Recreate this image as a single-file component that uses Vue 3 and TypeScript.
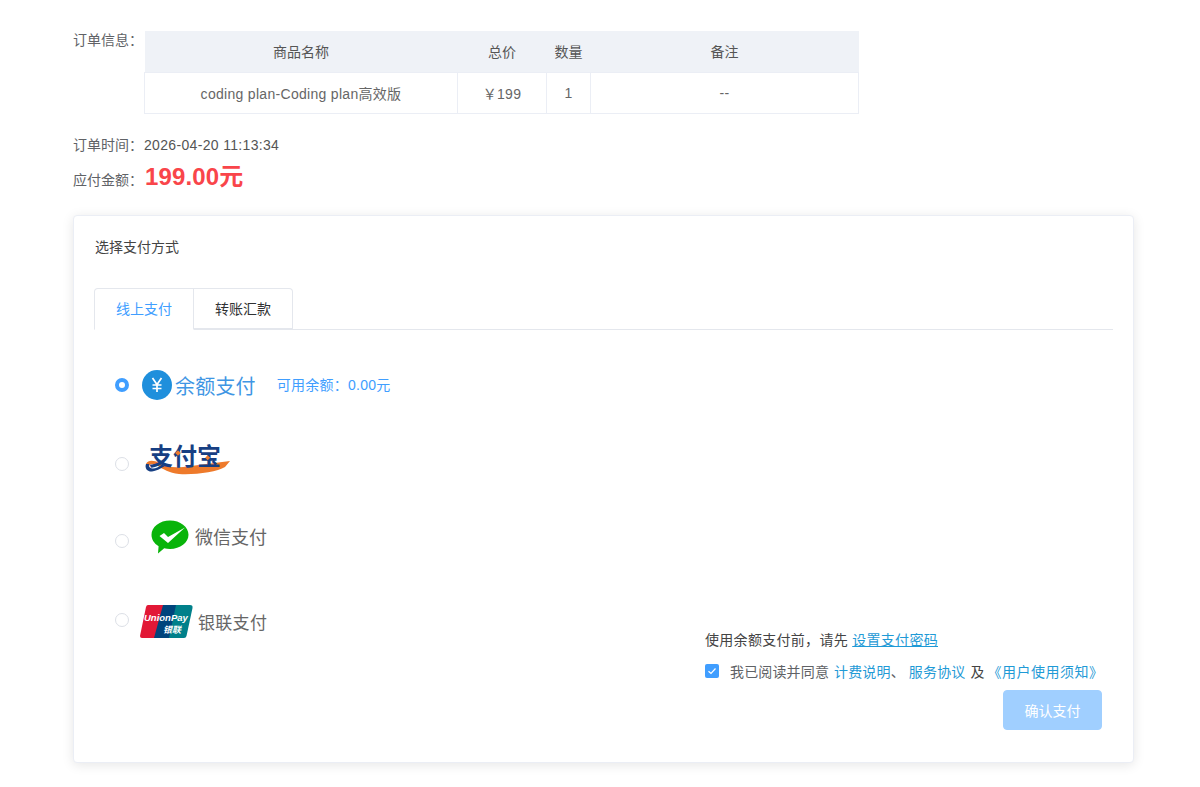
<script setup lang="ts">
const columns = [
  { title: '商品名称', value: 'coding plan-Coding plan高效版', width: 313 },
  { title: '总价', value: '￥199', width: 89 },
  { title: '数量', value: '1', width: 44 },
  { title: '备注', value: '--', width: 268 },
]
</script>

<template>
  <div class="page">
    <div class="order-row">
      <span class="label table-label">订单信息：</span>
      <table class="order-table">
        <colgroup>
          <col v-for="c in columns" :key="c.title" :style="{ width: c.width + 'px' }" />
        </colgroup>
        <thead>
          <tr><th v-for="c in columns" :key="c.title">{{ c.title }}</th></tr>
        </thead>
        <tbody>
          <tr><td v-for="c in columns" :key="c.title">{{ c.value }}</td></tr>
        </tbody>
      </table>
    </div>
    <div class="meta time"><span class="label">订单时间：</span><span class="value">2026-04-20 11:13:34</span></div>
    <div class="meta amount"><span class="label amount-label">应付金额：</span><span class="price">199.00元</span></div>

    <section class="card">
      <h2 class="card-title">选择支付方式</h2>
      <div class="tabs">
        <button class="tab active">线上支付</button>
        <button class="tab second">转账汇款</button>
      </div>
      <div class="pay-body">
        <div class="methods">
          <div class="method balance">
            <span class="radio checked"></span>
            <svg class="yuan-icon" width="30" height="30" viewBox="0 0 30 30">
              <circle cx="15" cy="15" r="15" fill="#1f8fdc" />
              <path d="M10.5 8 15 14.5 19.5 8M15 14.5V22M10.5 15h9M10.5 18.5h9" fill="none" stroke="#fff" stroke-width="1.7" />
            </svg>
            <span class="balance-name">余额支付</span>
            <span class="balance-left">可用余额：0.00元</span>
          </div>
          <div class="method alipay">
            <span class="radio"></span>
            <span class="alipay-logo">
              <svg class="alipay-swoosh" width="86" height="17" viewBox="0 0 86 17">
                <path d="M1 6C3 1.500 9 2 14 5 22 10 32 10 46 8L85 3 80 9C72 14 50 17 34 16 24 15 18 11 13 8 8 5 5 6 4 8Z" fill="#ee7a2b" />
                <path d="M1 6C-.500 10 2 14 7 13.500 11 13 15 11 20 8L17 6.500C13 9.500 10 11 7 10.500 4.500 10 3.500 8 4 6Z" fill="#173f83" />
              </svg>
              <span class="alipay-text">支付宝</span>
              <svg class="alipay-dots" width="86" height="30" viewBox="0 0 86 30">
                <rect x="32" y="7" width="4" height="4" fill="#ee7a2b" transform="rotate(45 34 9)" />
                <rect x="62" y="12" width="3.500" height="3.500" fill="#ee7a2b" transform="rotate(45 63.700 13.700)" />
              </svg>
            </span>
          </div>
          <div class="method wechat">
            <span class="radio"></span>
            <svg class="wechat-icon" width="38" height="34" viewBox="0 0 38 34">
              <path d="M19 .5C29.200.5 37.500 6.900 37.500 14.800S29.200 29 19 29c-2 0-4-.2-5.800-.8L7 33.500l.6-7.300C3.100 23.600.500 19.400.500 14.800.500 6.900 8.800.5 19 .5Z" fill="#09b40a" />
              <path d="M8.500 16 13 13l4 4 17-9.500L17 23Z" fill="#fff" />
            </svg>
            <span class="wechat-name">微信支付</span>
          </div>
          <div class="method union">
            <span class="radio"></span>
            <svg class="union-icon" width="53" height="33" viewBox="0 0 53 33">
              <path d="M8 0H25L17 33H2Q-.5 33 .2 30L6 2Q6.500 0 8 0Z" fill="#e21836" />
              <path d="M23 0H38L31 33H14Z" fill="#00447c" />
              <path d="M36 0H50Q53 0 52.500 3L46.500 31Q46 33 44 33H29Z" fill="#00808a" />
              <text x="4" y="16" class="union-latin">UnionPay</text>
              <text x="23" y="28" class="union-cn">银联</text>
            </svg>
            <span class="union-name">银联支付</span>
          </div>
        </div>
        <div class="confirm">
          <p class="pwd-tip">使用余额支付前，请先 <a class="pwd-link" href="#">设置支付密码</a></p>
          <div class="agree">
            <span class="checkbox">
              <svg width="14" height="14" viewBox="0 0 14 14"><path d="M3.500 7.200 6 9.500l4.500-5" fill="none" stroke="#fff" stroke-width="1.200" /></svg>
            </span>
            <span class="agree-text">我已阅读并同意</span>
            <a class="doc" href="#">计费说明</a><span class="doc-sep">、</span>
            <a class="doc service" href="#">服务协议</a>
            <span class="and">及</span>
            <a class="doc notice" href="#">《用户使用须知》</a>
          </div>
          <div class="actions"><button class="pay-btn" disabled>确认支付</button></div>
        </div>
      </div>
    </section>
  </div>
</template>

<style>
html, body { margin: 0; background: #fff; }
</style>

<style scoped>
.page {
  box-sizing: border-box;
  width: 1200px;
  height: 787px;
  overflow: hidden;
  padding: 31px 66px 0 73px;
  font-family: "Liberation Sans", "Noto Sans CJK SC", sans-serif;
  font-size: 14px;
  color: #606266;
}
.order-row { display: flex; align-items: flex-start; }
.label { width: 71px; flex: none; color: #606266; white-space: nowrap; }
.table-label { line-height: 18px; }
.order-table {
  width: 714px;
  table-layout: fixed;
  border-collapse: collapse;
  color: #606266;
}
.order-table th {
  height: 39px;
  padding: 0 0 2px;
  background: #eff2f7;
  font-weight: 400;
  color: #555;
}
.order-table td {
  height: 39px;
  padding: 0 0 1px;
  text-align: center;
  color: #666;
  letter-spacing: .3px;
  border: 1px solid #ebeef5;
}
.meta { display: flex; align-items: center; }
.time { margin-top: 20px; height: 20px; }
.value { color: #555; letter-spacing: .33px; padding-top: 1px; }
.amount { margin-top: 8px; height: 30px; }
.amount-label { padding-top: 4px; }
.price {
  margin-left: 1px;
  padding-bottom: 6px;
  color: #f9454a;
  font-size: 24px;
  font-weight: 700;
  letter-spacing: .15px;
}
.card {
  box-sizing: border-box;
  height: 548px;
  margin-top: 23px;
  padding: 21px 20px 0;
  background: #fff;
  border: 1px solid #ebeef5;
  border-radius: 4px;
  box-shadow: 0 2px 12px rgba(0, 0, 0, 0.1);
}
.card-title {
  margin: 0;
  padding-left: 1px;
  font-size: 14px;
  font-weight: 400;
  line-height: 20px;
  color: #444;
}
.tabs {
  display: flex;
  height: 41px;
  margin-top: 31px;
  border-bottom: 1px solid #e4e7ed;
}
.tab {
  box-sizing: border-box;
  height: 41px;
  padding: 0 0 2px;
  background: #fff;
  border: 1px solid #e4e7ed;
  font: inherit;
  color: #303133;
}
.tab.active {
  width: 100px;
  height: 42px;
  color: #409eff;
  border-bottom-color: #fff;
  border-radius: 4px 0 0 0;
}
.tab.second {
  width: 99px;
  border-left: 0;
  border-radius: 0 4px 0 0;
}
.pay-body {
  display: flex;
  justify-content: space-between;
  align-items: flex-start;
}
.methods { width: 400px; padding-left: 21px; }
.method { display: flex; align-items: center; }
.radio {
  box-sizing: border-box;
  flex: none;
  width: 14px;
  height: 14px;
  border: 1px solid #dcdfe6;
  border-radius: 50%;
  background: #fff;
}
.radio.checked {
  border: 4px solid #409eff;
}
.balance { height: 32px; margin-top: 39px; }
.yuan-icon { margin-left: 13px; flex: none; }
.balance-name {
  margin-left: 3px;
  font-size: 20px;
  letter-spacing: .2px;
  color: #3f96e4;
}
.balance-left {
  margin-left: 21px;
  color: #409eff;
  font-size: 14px;
  letter-spacing: .25px;
  padding-bottom: 2px;
}
.alipay { height: 40px; margin-top: 33px; align-items: flex-end; }
.alipay .radio { margin-bottom: 3px; }
.alipay-logo {
  position: relative;
  display: block;
  width: 90px;
  height: 40px;
  margin-left: 15px;
}
.alipay-text {
  position: absolute;
  left: 5px;
  top: 5px;
  font-family: "Noto Sans CJK SC", sans-serif;
  font-size: 24px;
  line-height: 32px;
  font-weight: 700;
  letter-spacing: 0;
  color: #173f83;
}
.alipay-swoosh { position: absolute; left: 1px; top: 24px; }
.alipay-dots { position: absolute; left: 0; top: 10px; }
.wechat { height: 36px; margin-top: 45px; }
.wechat .radio { margin-top: 8px; }
.wechat-icon { margin-left: 22px; flex: none; }
.wechat-name { margin-left: 6px; font-size: 18px; color: #666; position: relative; top: -1px; }
.union { height: 34px; margin-top: 49px; }
.union .radio { margin-bottom: 2px; }
.union-icon { margin-left: 11px; flex: none; }
.union-latin { font: italic 700 9.500px "Liberation Sans", sans-serif; fill: #fff; }
.union-cn { font: italic 700 9px "Noto Sans CJK SC", sans-serif; fill: #fff; }
.union-name { margin-left: 5px; font-size: 17px; letter-spacing: .3px; color: #666; }
.confirm {
  margin-top: 300px;
  width: 408px;
  flex: none;
  color: #444;
  letter-spacing: .15px;
}
.pwd-tip { margin: 0; line-height: 20px; white-space: nowrap; letter-spacing: .3px; }
.pwd-link { color: #1f9ad6; text-decoration: underline; }
.agree {
  display: flex;
  align-items: center;
  margin-top: 11px;
  height: 20px;
  white-space: nowrap;
}
.checkbox {
  display: flex;
  width: 14px;
  height: 14px;
  margin-right: 11px;
  border-radius: 2px;
  background: #409eff;
}
.agree-text { color: #606266; margin-right: 5px; }
.doc { color: #1f9ad6; text-decoration: none; }
.doc-sep { color: #606266; margin-right: 4px; }
.and { margin: 0 5px; color: #444; }
.notice { margin-left: -2px; letter-spacing: .5px; }
.actions { display: flex; justify-content: flex-end; margin-top: 9px; padding-right: 11px; }
.pay-btn {
  box-sizing: border-box;
  width: 99px;
  height: 40px;
  padding: 0;
  border: 1px solid #a0cfff;
  border-radius: 4px;
  background: #a0cfff;
  color: #fff;
  font: inherit;
}
</style>
